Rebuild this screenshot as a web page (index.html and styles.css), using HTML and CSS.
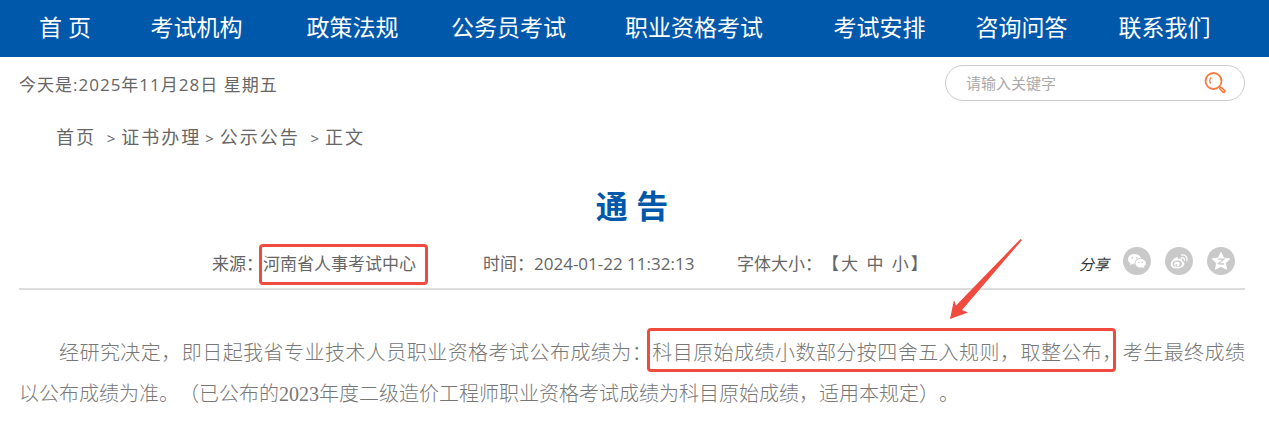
FILE: index.html
```
<!DOCTYPE html>
<html lang="zh-CN">
<head>
    <meta charset="UTF-8">
    <meta name="viewport" content="width=device-width, initial-scale=1.0">
    <title>通告</title>
    <link rel="stylesheet" href="styles.css">
</head>
<body>
    <nav class="nav">
        <a href="#">首 页</a>
        <a href="#">考试机构</a>
        <a href="#">政策法规</a>
        <a href="#">公务员考试</a>
        <a href="#">职业资格考试</a>
        <a href="#">考试安排</a>
        <a href="#">咨询问答</a>
        <a href="#">联系我们</a>
    </nav>

    <div class="wrap">
        <div class="topbar">
            <div class="date">今天是:2025年11月28日 星期五</div>
            <form class="search">
                <input type="text" name="keyword" aria-label="关键字" placeholder="请输入关键字">
                <button type="submit" aria-label="搜索">
                    <svg width="22" height="22" viewBox="0 0 22 22" fill="none" stroke="#fb7a40">
                        <circle cx="9.500" cy="9" r="8" stroke-width="1.800"/>
                        <path d="M7.300 5.600C5.400 7 5.300 9.800 6.700 11.600" stroke-width="1.300"/>
                        <path d="M17 16.500l2.700 2.700" stroke-width="3.800" stroke-linecap="round"/>
                        <path d="M17 16.500l2.500 2.500" stroke="#fff" stroke-width="1"/>
                    </svg>
                </button>
            </form>
        </div>

        <div class="crumbs">
            <a href="#">首页</a>
            <span>&gt;</span><a href="#">证书办理</a><span>&gt;</span><a href="#">公示公告</a>
            <span>&gt;</span>正文
        </div>

        <h1>通 告</h1>

        <div class="meta">
            <div class="source">来源：<span class="mark mark-source">河南省人事考试中心</span></div>
            <div class="time">时间：2024-01-22 11:32:13</div>
            <div class="size">字体大小：【<a href="#">大</a> <a href="#">中</a> <a href="#">小</a>】</div>
            <div class="share">
                <em>分享</em>
                <a href="#" aria-label="微信">
                    <svg width="28" height="28" viewBox="0 0 28 28">
                        <circle cx="14" cy="14" r="14" fill="#c9c9c9"/>
                        <path d="M11.500 7C7.700 7 5 9.300 5 12.200c0 1.700.9 3.100 2.300 4.100l-.6 2 2.400-1.200c.8.2 1.600.3 2.500.3-.7-3.700 2.500-6.400 6.400-6.200C17.400 8.700 14.700 7 11.500 7z" fill="#fff"/>
                        <path d="M17.600 12c-3 0-5.200 1.900-5.200 4.300s2.200 4.300 5.200 4.300c.7 0 1.300-.1 1.900-.3l1.900 1-.5-1.700c1.200-.8 1.900-1.900 1.900-3.300 0-2.400-2.200-4.300-5.200-4.300z" fill="#fff"/>
                        <g fill="#c9c9c9">
                            <circle cx="9.300" cy="10.800" r=".9"/>
                            <circle cx="13.700" cy="10.800" r=".9"/>
                            <circle cx="15.900" cy="15.200" r=".7"/>
                            <circle cx="19.300" cy="15.200" r=".7"/>
                        </g>
                    </svg>
                </a>
                <a href="#" aria-label="微博">
                    <svg width="28" height="28" viewBox="0 0 28 28">
                        <circle cx="14" cy="14" r="14" fill="#c9c9c9"/>
                        <path d="M12.300 10.200c.9.3.8 1.200.5 2 1.900-.8 4.400-1 4.500.8 0 .5-.3 1-.2 1.200 1.400.3 2.600 1.200 2.300 2.800-.4 2.700-3.900 4.600-7.600 4.600-3.300 0-6-1.600-6-4.300 0-3.100 4.200-7.800 6.500-7.100z" fill="#fff"/>
                        <ellipse cx="12.300" cy="16.800" rx="4.700" ry="3.300" fill="#c9c9c9"/>
                        <ellipse cx="11.900" cy="17.100" rx="2.900" ry="2.400" fill="#fff"/>
                        <circle cx="11.300" cy="17.700" r="1" fill="#c9c9c9"/>
                        <path d="M16.600 10.800c2-.5 3.300.9 2.800 2.700M16.500 8.100c3.800-.8 6.300 2.200 5.300 5.800" fill="none" stroke="#fff" stroke-width="1.200" stroke-linecap="round"/>
                    </svg>
                </a>
                <a href="#" aria-label="QQ空间">
                    <svg width="28" height="28" viewBox="0 0 28 28">
                        <circle cx="14" cy="14" r="14" fill="#c9c9c9"/>
                        <path d="M14 5.500l2.700 5.600 6.100.8-4.500 4.200 1.200 6.100L14 19.300l-5.500 2.900 1.200-6.100-4.500-4.200 6.100-.8z" fill="#fff" stroke="#fff" stroke-linejoin="round"/>
                        <path d="M10.800 12.200h6l-5.500 4.400c2 .5 4 .5 6 .2" fill="none" stroke="#c9c9c9" stroke-width="1.300"/>
                    </svg>
                </a>
            </div>
        </div>

        <div class="content">
            <p>经研究决定，即日起我省专业技术人员职业资格考试公布成绩为：<span class="mark mark-rule">科目原始成绩小数部分按四舍五入规则，取整公布，<svg class="arrow" width="76" height="81" viewBox="0 0 76 81"><path d="M73 1L13 71l6 2.500L1 80l4-19 2 5.500L71.500 0z" fill="#f04b3e"/></svg></span>考生最终成绩<span class="keep">以公布成绩为准</span>。（已公布的2023年度二级造价工程师职业资格考试成绩为科目原始成绩，适用本规定）。</p>
        </div>
    </div>
</body>
</html>
```
FILE: styles.css
```
body {
    margin: 0;
    background: #fff;
    color: #666;
    font-family: "Open Sans", "Noto Sans CJK SC", sans-serif;
    font-size: 17px;
    line-height: 24px;
    text-spacing-trim: space-all;
}
a {
    color: inherit;
    text-decoration: none;
}
svg {
    display: block;
}
.nav {
    display: grid;
    grid-template-columns: 130fr 133fr 179fr 133fr 238fr 133fr 151fr 135fr;
    padding: 0 37px 2px 0;
    background: #0058ab;
    color: #fff;
    font-size: 23px;
    line-height: 55px;
    text-align: center;
    white-space: nowrap;
}
.wrap {
    padding: 8px 24px 0 19px;
}
.topbar {
    display: flex;
    justify-content: space-between;
    align-items: center;
}
.date {
    padding-top: 4px;
    letter-spacing: 1px;
}
.search {
    display: flex;
    align-items: center;
    box-sizing: border-box;
    width: 300px;
    height: 36px;
    padding: 0 18px 0 20px;
    border: 1px solid #ccc;
    border-radius: 18px;
}
.search input {
    flex: 1;
    min-width: 0;
    padding: 0;
    border: 0;
    outline: 0;
    background: none;
    font-family: inherit;
    font-size: 15px;
}
.search input::placeholder {
    color: #aaa;
}
.search button {
    padding: 0;
    border: 0;
    background: none;
    cursor: pointer;
}
.crumbs {
    margin-top: 24px;
    padding-left: 37px;
    font-size: 18px;
    letter-spacing: 2px;
}
.crumbs span {
    margin: 0 4px;
    font-size: 15px;
}
h1 {
    margin: 32px 0 0;
    color: #0058ab;
    font-size: 32px;
    line-height: 48px;
    text-align: center;
}
.meta {
    display: flex;
    align-items: center;
    height: 44px;
    margin-top: 12px;
    padding: 0 10px 2px 193px;
    border-bottom: 2px solid #ddd;
    white-space: nowrap;
}
.source {
    width: 271px;
}
.time {
    width: 254px;
}
.size a {
    margin: 0 2px;
}
.share {
    display: flex;
    align-items: center;
    gap: 14px;
    margin-left: auto;
}
.share em {
    color: #333;
    font-size: 15px;
}
.share a {
    padding-bottom: 6px;
}
/* red frames round the key phrases */
.mark {
    position: relative;
}
.mark::after {
    content: "";
    position: absolute;
    border: 3px solid #f04b3e;
    border-radius: 4px;
}
.mark-source::after {
    inset: -8px -12px -10px -4px;
}
.mark-rule::after {
    inset: -14px 7px -8px -5px;
}
.arrow {
    position: absolute;
    right: 98px;
    bottom: 44px;
}
.content {
    padding-top: 43px;
    color: #777;
    font-family: "Liberation Serif", "Noto Sans CJK SC", serif;
    font-size: 20px;
    font-weight: 300;
    line-height: 41px;
}
.content p {
    margin: 0;
    text-align: justify;
    text-indent: 2em;
}
.keep {
    white-space: nowrap;
}
```
